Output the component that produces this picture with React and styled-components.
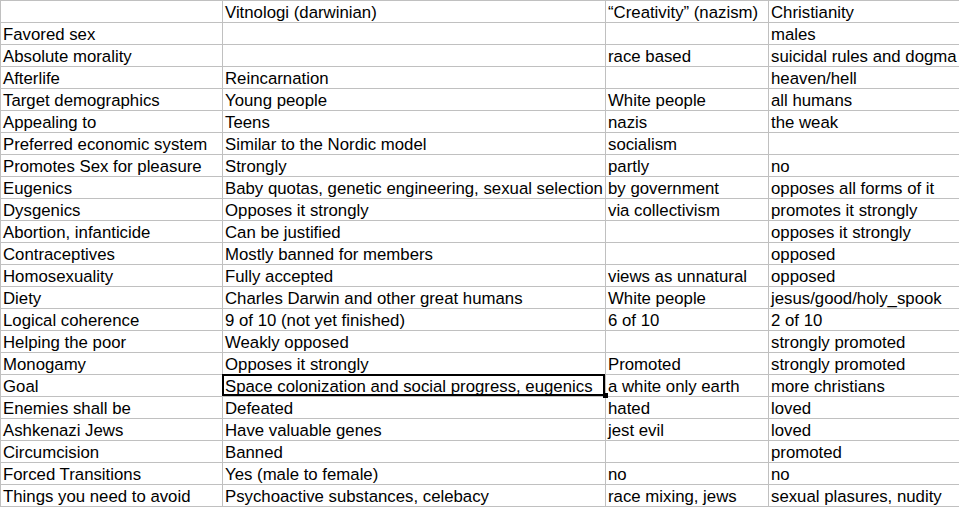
import React from "react";
import styled, { createGlobalStyle } from "styled-components";

const Global = createGlobalStyle`
  html, body { margin: 0; padding: 0; background: #ffffff; overflow: hidden; }
  body { font-family: "Liberation Sans", Arial, sans-serif; }
`;

const Sheet = styled.div`
  display: grid;
  grid-template-columns: 222px 383px 163px 200px;
  border-top: 1px solid #c0c0c0;
  border-left: 1px solid #c0c0c0;
  width: max-content;
`;

const Cell = styled.div`
  position: relative;
  box-sizing: border-box;
  height: 22px;
  padding: 2px 0 0 2px;
  border-right: 1px solid #c0c0c0;
  border-bottom: 1px solid #c0c0c0;
  font-size: 16.8px;
  line-height: 19px;
  color: #000;
  white-space: nowrap;
  overflow: visible;
  ${(p) =>
    p.$selected &&
    `
    z-index: 2;
    &::after {
      content: "";
      position: absolute;
      left: -1px;
      top: -1px;
      right: 0;
      bottom: 0;
      border: 2px solid #000;
      pointer-events: none;
    }
    &::before {
      content: "";
      position: absolute;
      right: -3px;
      bottom: -2px;
      width: 5px;
      height: 5px;
      background: #000;
      z-index: 3;
    }
  `}
`;

const rows = [
  ["", "Vitnologi (darwinian)", "\u201cCreativity\u201d (nazism)", "Christianity"],
  ["Favored sex", "", "", "males"],
  ["Absolute morality", "", "race based", "suicidal rules and dogma"],
  ["Afterlife", "Reincarnation", "", "heaven/hell"],
  ["Target demographics", "Young people", "White people", "all humans"],
  ["Appealing to", "Teens", "nazis", "the weak"],
  ["Preferred economic system", "Similar to the Nordic model", "socialism", ""],
  ["Promotes Sex for pleasure", "Strongly", "partly", "no"],
  ["Eugenics", "Baby quotas, genetic engineering, sexual selection", "by government", "opposes all forms of it"],
  ["Dysgenics", "Opposes it strongly", "via collectivism", "promotes it strongly"],
  ["Abortion, infanticide", "Can be justified", "", "opposes it strongly"],
  ["Contraceptives", "Mostly banned for members", "", "opposed"],
  ["Homosexuality", "Fully accepted", "views as unnatural", "opposed"],
  ["Diety", "Charles Darwin and other great humans", "White people", "jesus/good/holy_spook"],
  ["Logical coherence", "9 of 10 (not yet finished)", "6 of 10", "2 of 10"],
  ["Helping the poor", "Weakly opposed", "", "strongly promoted"],
  ["Monogamy", "Opposes it strongly", "Promoted", "strongly promoted"],
  ["Goal", "Space colonization and social progress, eugenics", "a white only earth", "more christians"],
  ["Enemies shall be", "Defeated", "hated", "loved"],
  ["Ashkenazi Jews", "Have valuable genes", "jest evil", "loved"],
  ["Circumcision", "Banned", "", "promoted"],
  ["Forced Transitions", "Yes (male to female)", "no", "no"],
  ["Things you need to avoid", "Psychoactive substances, celebacy", "race mixing, jews", "sexual plasures, nudity"],
];

export default function App() {
  return (
    <>
      <Global />
      <Sheet>
        {rows.map((r, ri) =>
          r.map((c, ci) => (
            <Cell key={`${ri}-${ci}`} $selected={ri === 17 && ci === 1}>
              {c}
            </Cell>
          ))
        )}
      </Sheet>
    </>
  );
}
